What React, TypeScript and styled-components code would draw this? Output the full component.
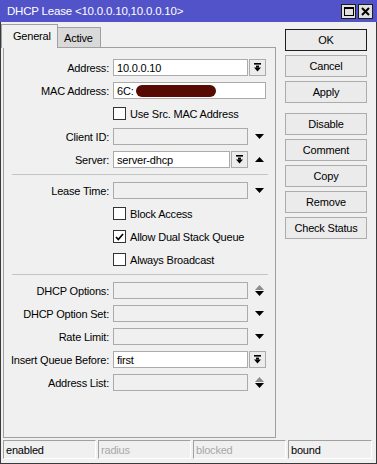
import styled, { createGlobalStyle } from "styled-components";

const GlobalStyle = createGlobalStyle`
  html, body {
    margin: 0;
    padding: 0;
    background: #ffffff;
  }
  body {
    font-family: "Liberation Sans", Arial, sans-serif;
    font-size: 11px;
    letter-spacing: -0.2px;
    color: #000;
  }
  * {
    box-sizing: border-box;
  }
`;

// ---------------------------------------------------------------------------
// icons

const DropIcon = () => (
  <svg width="7" height="9" viewBox="0 0 7 9">
    <rect x="0" y="0" width="7" height="1.6" fill="#000" />
    <rect x="2" y="2.6" width="3" height="2" fill="#000" />
    <polygon points="0,4.6 7,4.6 3.5,8.4" fill="#000" />
  </svg>
);

const DownIcon = () => (
  <svg width="9" height="5" viewBox="0 0 9 5">
    <polygon points="0,0 9,0 4.5,5" fill="#000" />
  </svg>
);

const UpIcon = () => (
  <svg width="9" height="5" viewBox="0 0 9 5">
    <polygon points="0,5 9,5 4.5,0" fill="#000" />
  </svg>
);

const UpDownIcon = () => (
  <svg width="9" height="11" viewBox="0 0 9 11">
    <polygon points="0,5 9,5 4.5,0" fill="#8c8c8c" />
    <polygon points="0,6 9,6 4.5,11" fill="#000" />
  </svg>
);

const CheckIcon = () => (
  <svg width="9" height="8" viewBox="0 0 9 8">
    <path d="M1 4 L3.3 6.5 L8 1" stroke="#000" strokeWidth="1.7" fill="none" />
  </svg>
);

// ---------------------------------------------------------------------------

type Arrow = "down" | "up" | "updown";

const arrowIcon = (arrow?: Arrow) => {
  if (arrow === "down") return <DownIcon />;
  if (arrow === "up") return <UpIcon />;
  if (arrow === "updown") return <UpDownIcon />;
  return null;
};

const FieldRow = ({
  label,
  value,
  button,
  arrow,
  children,
}: {
  label: string;
  value?: string;
  button?: boolean;
  arrow?: Arrow;
  children?: React.ReactNode;
}) => {
  const filled = value !== undefined || !!children;
  return (
    <Row>
      <Label>{label}</Label>
      <Field>
        <Input filled={filled}>
          {value}
          {children}
        </Input>
        {button && (
          <DropButton>
            <DropIcon />
          </DropButton>
        )}
        {arrow && <ArrowSlot>{arrowIcon(arrow)}</ArrowSlot>}
      </Field>
    </Row>
  );
};

const CheckRow = ({ label, checked }: { label: string; checked?: boolean }) => (
  <Row>
    <CheckIndent />
    <CheckBox>{checked && <CheckIcon />}</CheckBox>
    <CheckLabel>{label}</CheckLabel>
  </Row>
);

const App = () => {
  return (
    <>
      <GlobalStyle />
      <Window>
        <TitleBar>
          <Title>DHCP Lease &lt;10.0.0.10,10.0.0.10&gt;</Title>
          <TitleButtons>
            <TitleButton>
              <svg width="10" height="9" viewBox="0 0 10 9">
                <rect x="0.5" y="0.5" width="9" height="8" fill="none" stroke="#000" />
                <rect x="0" y="0" width="10" height="2" fill="#000" />
              </svg>
            </TitleButton>
            <TitleButton>
              <svg width="9" height="9" viewBox="0 0 9 9">
                <path d="M1 1 L8 8 M8 1 L1 8" stroke="#000" strokeWidth="2" />
              </svg>
            </TitleButton>
          </TitleButtons>
        </TitleBar>
        <Frame>
          <Main>
            <LeftColumn>
              <Tabs>
                <Tab active>General</Tab>
                <Tab>Active</Tab>
              </Tabs>
              <Panel>
                <FieldRow label="Address:" value="10.0.0.10" button />
                <FieldRow label="MAC Address:">
                  6C:<Redacted />
                </FieldRow>
                <CheckRow label="Use Src. MAC Address" />
                <FieldRow label="Client ID:" arrow="down" />
                <FieldRow label="Server:" value="server-dhcp" button arrow="up" />
                <Separator />
                <FieldRow label="Lease Time:" arrow="down" />
                <CheckRow label="Block Access" />
                <CheckRow label="Allow Dual Stack Queue" checked />
                <CheckRow label="Always Broadcast" />
                <Separator />
                <FieldRow label="DHCP Options:" arrow="updown" />
                <FieldRow label="DHCP Option Set:" arrow="down" />
                <FieldRow label="Rate Limit:" arrow="down" />
                <FieldRow label="Insert Queue Before:" value="first" button />
                <FieldRow label="Address List:" arrow="updown" />
              </Panel>
            </LeftColumn>
            <ButtonColumn>
              <Button isDefault>OK</Button>
              <Button>Cancel</Button>
              <Button>Apply</Button>
              <Button groupStart>Disable</Button>
              <Button>Comment</Button>
              <Button>Copy</Button>
              <Button>Remove</Button>
              <Button>Check Status</Button>
            </ButtonColumn>
          </Main>
          <StatusBar>
            <StatusCell>enabled</StatusCell>
            <StatusCell dim>radius</StatusCell>
            <StatusCell dim>blocked</StatusCell>
            <StatusCell last>bound</StatusCell>
          </StatusBar>
        </Frame>
      </Window>
    </>
  );
};

// ---------------------------------------------------------------------------

const Window = styled.div`
  width: 377px;
  height: 464px;
  display: flex;
  flex-direction: column;
`;
const TitleBar = styled.div`
  height: 22px;
  flex: none;
  display: flex;
  align-items: center;
  justify-content: space-between;
  padding: 0 4px 0 7px;
  background: #5252c9;
  color: #ffffff;
`;
const Title = styled.div`
  font-size: 11.5px;
  white-space: nowrap;
`;
const TitleButtons = styled.div`
  display: flex;
  gap: 2px;
`;
const TitleButton = styled.div`
  width: 15px;
  height: 15px;
  display: flex;
  align-items: center;
  justify-content: center;
  background: #e0e0e0;
  border: 1px solid #1c1c1c;
`;
const Frame = styled.div`
  flex: 1;
  display: flex;
  flex-direction: column;
  background: #f0f0f0;
  border: 1px solid #3a3a3a;
  border-top: 0;
`;
const Main = styled.div`
  display: flex;
`;
const LeftColumn = styled.div`
  display: flex;
  flex-direction: column;
  padding-top: 2px;
`;
const Tabs = styled.div`
  height: 23px;
  display: flex;
  align-items: flex-end;
`;
const Tab = styled.div<{ active?: boolean }>`
  display: flex;
  align-items: center;
  border: 1px solid #a0a0a0;
  border-bottom: 0;
  ${({ active }) =>
    active
      ? `
    position: relative;
    z-index: 1;
    width: 57px;
    height: 24px;
    margin-bottom: -1px;
    padding: 0 0 2px 11px;
    background: #f0f0f0;
  `
      : `
    width: 43px;
    height: 20px;
    border-left: 0;
    padding-left: 6px;
    background: #d9d9d9;
  `}
`;
const Panel = styled.div`
  width: 273px;
  height: 391px;
  margin-left: 2px;
  padding-top: 8px;
  border: 1px solid #a0a0a0;
`;
const Row = styled.div`
  height: 23px;
  display: flex;
  align-items: center;
`;
const Label = styled.div`
  width: 109px;
  padding-right: 4px;
  text-align: right;
  white-space: nowrap;
`;
const Field = styled.div`
  width: 153px;
  height: 17px;
  display: flex;
  gap: 1px;
`;
const Input = styled.div<{ filled: boolean }>`
  flex: 1;
  min-width: 0;
  display: flex;
  align-items: center;
  padding-left: 3px;
  white-space: nowrap;
  overflow: hidden;
  border: 1px solid #ababab;
  background: ${({ filled }) => (filled ? "#ffffff" : "#f0f0f0")};
`;
const Redacted = styled.span`
  display: inline-block;
  width: 80px;
  height: 12px;
  margin-left: 2px;
  border-radius: 6px;
  background: #560a02;
`;
const DropButton = styled.div`
  width: 17px;
  flex: none;
  display: flex;
  align-items: center;
  justify-content: center;
  border: 1px solid #ababab;
  background: #ececec;
`;
const ArrowSlot = styled.div`
  width: 17px;
  flex: none;
  display: flex;
  align-items: center;
  justify-content: center;
  padding-left: 3px;
`;
const CheckIndent = styled.div`
  width: 109px;
`;
const CheckBox = styled.div`
  width: 13px;
  height: 13px;
  display: flex;
  align-items: center;
  justify-content: center;
  border: 1px solid #333333;
  background: #ffffff;
`;
const CheckLabel = styled.div`
  margin-left: 4px;
  white-space: nowrap;
`;
const Separator = styled.div`
  height: 1px;
  margin: 3px 7px 4px 8px;
  background: #c4c4c4;
`;
const ButtonColumn = styled.div`
  width: 82px;
  margin-left: 9px;
  padding-top: 7px;
  display: flex;
  flex-direction: column;
  gap: 4px;
`;
const Button = styled.div<{ isDefault?: boolean; groupStart?: boolean }>`
  height: 22px;
  display: flex;
  align-items: center;
  justify-content: center;
  background: #ebebeb;
  border: 1px solid ${({ isDefault }) => (isDefault ? "#1e1e1e" : "#acacac")};
  ${({ groupStart }) => (groupStart ? `margin-top: 6px;` : ``)}
`;
const StatusBar = styled.div`
  display: flex;
  gap: 2px;
  margin-top: 2px;
  padding-left: 2px;
`;
const StatusCell = styled.div<{ dim?: boolean; last?: boolean }>`
  width: ${({ last }) => (last ? "84px" : "93px")};
  height: 19px;
  display: flex;
  align-items: center;
  padding-left: 2px;
  border: 1px solid #a0a0a0;
  border-right-color: #ffffff;
  border-bottom-color: #ffffff;
  color: ${({ dim }) => (dim ? "#a8a8a8" : "#000000")};
`;

export default App;
